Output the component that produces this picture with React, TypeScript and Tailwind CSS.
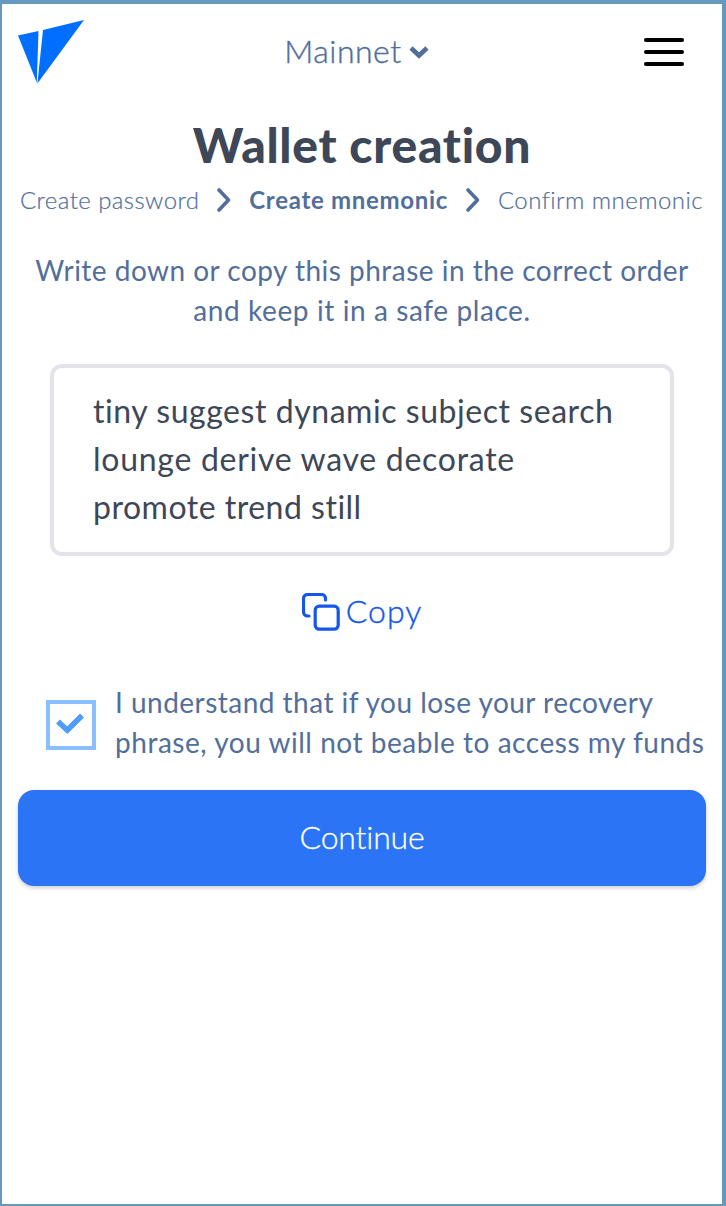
import React from "react";

function Logo() {
  return (
    <svg width="66" height="64" viewBox="0 0 66 64" fill="#006fff">
      <path d="M0 15.5 20.5 11 18.8 62.5Z" />
      <path d="M25 10 66 0 19.4 63.5Z" />
    </svg>
  );
}

function StepArrow() {
  return (
    <svg width="16" height="26" viewBox="0 0 16 26" fill="none" stroke="#526e9b" strokeWidth="3.6" strokeLinecap="round" strokeLinejoin="round">
      <path d="M3 3 12.5 13 3 23" />
    </svg>
  );
}

export default function App() {
  return (
    <div className="flex h-[1206px] w-[726px] flex-col border-t-4 border-r-4 border-b-2 border-l-2 border-[#6699c0] bg-white font-['Lato','Liberation_Sans',sans-serif] text-[#526e9b]">
      <header className="flex h-24 items-center justify-between pr-[38px] pl-4">
        <Logo />
        <button className="flex items-center gap-[7px] pr-[15px] text-[32px] font-light">
          <span className="pb-[3px] tracking-[0.5px] whitespace-nowrap [-webkit-text-stroke:0.4px]">Mainnet</span>
          <svg width="20" height="14" viewBox="0 0 20 14" fill="none" stroke="#526e9b" strokeWidth="4.6">
            <path d="M2 3 10 10.5 18 3" />
          </svg>
        </button>
        <button aria-label="Menu" className="flex w-10 flex-col gap-2">
          <span className="h-1 rounded-full bg-black" />
          <span className="h-1 rounded-full bg-black" />
          <span className="h-1 rounded-full bg-black" />
        </button>
      </header>
      <h1 className="mt-[9px] flex h-[72px] items-center justify-center text-[48px] font-black text-[#3d4757]">
        <span className="tracking-[0.7px]">Wallet creation</span>
      </h1>
      <nav className="mt-px flex h-9 items-center justify-between pr-[19px] pl-[18px] text-[24px] font-light whitespace-nowrap">
        <span className="tracking-[0.43px] [-webkit-text-stroke:0.2px]">Create password</span>
        <StepArrow />
        <span className="font-bold tracking-[0.7px]">Create mnemonic</span>
        <StepArrow />
        <span className="tracking-[0.45px] [-webkit-text-stroke:0.2px]">Confirm mnemonic</span>
      </nav>
      <div className="mt-8 flex flex-col items-center text-[28px] leading-10 whitespace-nowrap">
        <span className="tracking-[0.48px]">Write down or copy this phrase in the correct order</span>
        <span className="tracking-[0.6px]">and keep it in a safe place.</span>
      </div>
      <div className="mt-[34px] mr-12 ml-12 flex h-48 flex-col items-start rounded-xl border-4 border-[#e2e4ea] pt-[19px] pl-[39px] text-[32px] leading-[48px] whitespace-nowrap text-[#3d4757]">
        <span className="tracking-[0.55px]">tiny suggest dynamic subject search</span>
        <span className="tracking-[0.72px]">lounge derive wave decorate</span>
        <span className="tracking-[0.5px]">promote trend still</span>
      </div>
      <button className="mt-8 flex h-12 items-center justify-center gap-[6px] text-[32px] font-light text-[#1756ea]">
        <svg width="38" height="38" viewBox="0 0 38 38" fill="none" stroke="#1756ea" strokeWidth="3.2" strokeLinecap="round">
          <rect x="13.2" y="13.2" width="23" height="23" rx="4" />
          <path d="M7 23H5.5a4 4 0 0 1-4-4V5.500a4 4 0 0 1 4-4H19.500a4 4 0 0 1 4 4V7" />
        </svg>
        <span className="pb-[2px] tracking-[1px] [-webkit-text-stroke:0.4px]">Copy</span>
      </button>
      <label className="mt-[46px] flex h-20 items-center pl-11">
        <span className="mt-[5px] flex h-[50px] w-[50px] shrink-0 items-center justify-center border-4 border-[#8abfff]">
          <svg className="mr-[2px] mb-[2px]" width="28" height="22" viewBox="0 0 28 22" fill="none" stroke="#4f9cfa" strokeWidth="5.6">
            <path d="M2 8.500 11.300 17.200 26 2.500" />
          </svg>
        </span>
        <span className="ml-[19px] flex flex-col items-start text-[28px] leading-10 whitespace-nowrap">
          <span className="tracking-[0.48px]">I understand that if you lose your recovery</span>
          <span className="tracking-[0.53px]">phrase, you will not beable to access my funds</span>
        </span>
      </label>
      <button className="mx-4 mt-[28px] flex h-24 items-center justify-center rounded-2xl bg-[#2b74f5] text-[32px] font-light text-white shadow-[0_2px_4px_rgba(0,0,0,0.2)]">
        <span className="pb-[2px] tracking-[-0.2px] [-webkit-text-stroke:0.3px]">Continue</span>
      </button>
    </div>
  );
}
